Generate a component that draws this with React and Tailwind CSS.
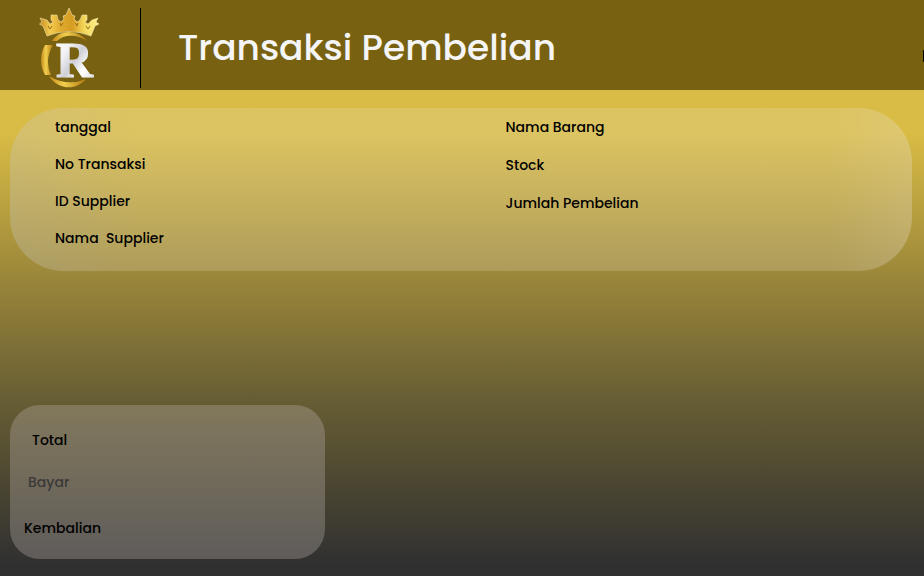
const supplierFields = ["tanggal", "No Transaksi", "ID Supplier", "Nama  Supplier"];

function Logo() {
  return (
    <svg viewBox="38 6 64 84" className="h-[84px] w-16 shrink-0" role="img" aria-label="Logo">
      <defs>
        <linearGradient id="gold" x1="0" x2="1">
          <stop offset="0" stopColor="#c88a1c" />
          <stop offset="0.18" stopColor="#f3cc50" />
          <stop offset="0.35" stopColor="#e0ab30" />
          <stop offset="0.55" stopColor="#d59c22" />
          <stop offset="0.75" stopColor="#f3d75a" />
          <stop offset="1" stopColor="#fff38a" />
        </linearGradient>
        <linearGradient id="ring" x1="0" x2="1">
          <stop offset="0" stopColor="#c28a1a" />
          <stop offset="0.4" stopColor="#f2cf4e" />
          <stop offset="1" stopColor="#b0780f" />
        </linearGradient>
        <linearGradient id="silver" x1="0" x2="1" y1="0" y2="1">
          <stop offset="0" stopColor="#ffffff" />
          <stop offset="0.3" stopColor="#f2f2f6" />
          <stop offset="0.5" stopColor="#cfcfd6" />
          <stop offset="0.7" stopColor="#ffffff" />
          <stop offset="1" stopColor="#d2d2d8" />
        </linearGradient>
      </defs>
      <path
        d="M47 36 L43 26 L39.500 24 L42 22 L40 18 L47 20 L50 24 L53 22 L51 20 L51 15 L57 15 L58 20 L61 22 L64 19 L63 16 L66 15 L69 8 L72 15 L75 16 L74 19 L77 22 L80 20 L82 15 L87 15 L87 20 L85 22 L88 24 L92 20 L98 18 L96 22 L99 24 L95 26 L91 36 Q69 27 47 36Z"
        fill="url(#gold)"
        stroke="#f3e3b0"
        strokeWidth="0.600"
      />
      <path
        d="M48 26 L50 29 L52 26 M60 23 L61 26 L63 23 M75 23 L77 26 L78 23 M86 26 L88 29 L90 26"
        fill="none"
        stroke="#9c6d14"
        strokeWidth="1"
      />
      <path d="M52 41 C58 30 77 28 87 41 C77 34 64 34 57 41Z" fill="url(#ring)" />
      <path d="M45 45 L53 45 Q44 60 51 75 L45 75 Q37 60 45 45Z" fill="url(#ring)" />
      <path d="M49 76 Q67 87 86 79 C76 91 58 90 49 76Z" fill="url(#ring)" />
      <text x="56" y="77" fontSize="51" fontWeight="700" fontFamily="'Liberation Serif', serif" fill="url(#silver)" stroke="url(#silver)" strokeWidth="1.200">
        R
      </text>
    </svg>
  );
}

export default function App() {
  return (
    <div
      className="flex min-h-screen flex-col overflow-hidden bg-[linear-gradient(to_bottom,#d9bc45_0%,#d9bc45_23%,#9b873a_48%,#685e34_69%,#303030_98%,#303030_100%)] text-[14px] font-medium text-black"
      style={{ fontFamily: "Poppins, Inter, sans-serif" }}
    >
      <header className="flex h-[90px] shrink-0 items-center justify-between bg-[#786212] pt-[6px]">
        <div className="flex items-center pl-[38px]">
          <Logo />
          <div className="ml-[38px] h-20 w-px bg-black" />
          <h1 className="ml-[37px] text-[36px] leading-[56px] font-medium whitespace-nowrap text-[#f5f5f5]">
            Transaksi Pembelian
          </h1>
        </div>
        <div className="mt-4 h-3 w-px rounded-l-full bg-black" />
      </header>

      <main className="flex flex-1 flex-col justify-between pt-[18px] pr-3 pb-[17px] pl-[10px]">
        <section className="grid h-[163px] grid-cols-2 rounded-[54px] bg-[linear-gradient(to_right,#c8c8c850_0%,#e8dfc838_14%,#e8dfc838_91%,#e8dfd050_100%)] pt-2 pl-[45px]">
          <ul className="flex flex-col gap-[15px] leading-[22px]">
            {supplierFields.map((field) => (
              <li key={field} className="whitespace-pre">{field}</li>
            ))}
          </ul>
          <ul className="flex flex-col gap-4 pl-[22px] leading-[22px]">
            <li>Nama Barang</li>
            <li>Stock</li>
            <li>Jumlah Pembelian</li>
          </ul>
        </section>

        <section className="flex h-[154px] w-[315px] flex-col rounded-[30px] bg-[#bdb3b054] pt-6 pl-[14px] leading-[22px]">
          <p className="pl-2">Total</p>
          <p className="mt-5 pl-1 text-[#3b3938]">Bayar</p>
          <p className="mt-6">Kembalian</p>
        </section>
      </main>
    </div>
  );
}
